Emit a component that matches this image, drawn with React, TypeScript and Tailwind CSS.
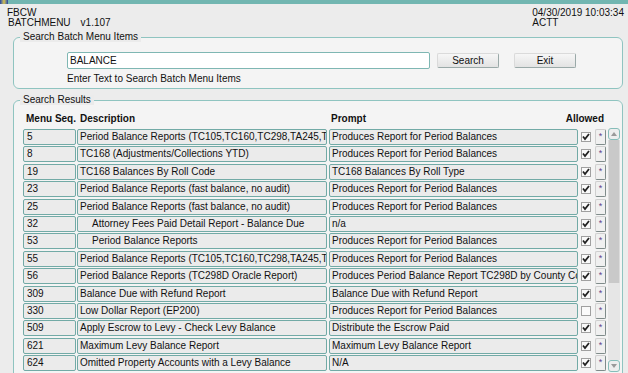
import React from "react";

type Row = { seq: string; desc: string; prompt: string; allowed: boolean; indent?: boolean };

const rows: Row[] = [
  { seq: "5", desc: "Period Balance Reports (TC105,TC160,TC298,TA245,TC", prompt: "Produces Report for Period Balances", allowed: true },
  { seq: "8", desc: "TC168 (Adjustments/Collections YTD)", prompt: "Produces Report for Period Balances", allowed: true },
  { seq: "19", desc: "TC168 Balances By Roll Code", prompt: "TC168 Balances By Roll Type", allowed: true },
  { seq: "23", desc: "Period Balance Reports (fast balance, no audit)", prompt: "Produces Report for Period Balances", allowed: true },
  { seq: "25", desc: "Period Balance Reports (fast balance, no audit)", prompt: "Produces Report for Period Balances", allowed: true },
  { seq: "32", desc: "Attorney Fees Paid Detail Report - Balance Due", prompt: "n/a", allowed: true, indent: true },
  { seq: "53", desc: "Period Balance Reports", prompt: "Produces Report for Period Balances", allowed: true, indent: true },
  { seq: "55", desc: "Period Balance Reports (TC105,TC160,TC298,TA245,TC", prompt: "Produces Report for Period Balances", allowed: true },
  { seq: "56", desc: "Period Balance Reports (TC298D Oracle Report)", prompt: "Produces Period Balance Report TC298D by County Co", allowed: true },
  { seq: "309", desc: "Balance Due with Refund Report", prompt: "Balance Due with Refund Report", allowed: true },
  { seq: "330", desc: "Low Dollar Report (EP200)", prompt: "Produces Report for Period Balances", allowed: false },
  { seq: "509", desc: "Apply Escrow to Levy - Check Levy Balance", prompt: "Distribute the Escrow Paid", allowed: true },
  { seq: "621", desc: "Maximum Levy Balance Report", prompt: "Maximum Levy Balance Report", allowed: true },
  { seq: "624", desc: "Omitted Property Accounts with a Levy Balance", prompt: "N/A", allowed: true },
];

const cell =
  "h-[16px] shrink-0 overflow-hidden whitespace-nowrap rounded-[2px] border border-[#72aaa6] bg-[#ebebeb] pl-[2px] leading-[14px]";

const Check = ({ on }: { on: boolean }) => (
  <div className="ml-[3px] mt-[3px] h-[10px] w-[10px] shrink-0 border border-[#a0a0a0] bg-[#fafafa]">
    {on && (
      <svg width="8" height="8" viewBox="0 0 8 8" className="block">
        <path d="M1 3.5 L3 6 L7 1" fill="none" stroke="#222" strokeWidth="1.8" />
      </svg>
    )}
  </div>
);

const Star = () => (
  <div className="ml-[4px] flex h-[16px] w-[11px] shrink-0 justify-center rounded-[2px] border border-[#cfcfcf] border-b-[#7f8b8a] border-r-[#7f8b8a] bg-[#f0f0f0] pt-[2px] text-[9px] leading-[8px] text-[#5b3f8a]">
    *
  </div>
);

const Button = ({ label, className }: { label: string; className?: string }) => (
  <div
    className={
      "flex h-[15px] w-[62px] items-center justify-center rounded-[2px] border border-[#dadada] border-b-[#9aa9a8] border-r-[#9aa9a8] bg-gradient-to-b from-[#f6f6f6] to-[#e3e3e3] " +
      (className ?? "")
    }
  >
    {label}
  </div>
);

export default function App() {
  return (
    <div className="h-[373px] w-[628px] overflow-hidden bg-[#ececec] font-['Liberation_Sans',Arial,sans-serif] text-[10px] text-[#111]">
      <div className="flex h-[4px] bg-[#72b6b1]">
        <div className="h-[4px] w-[8px] bg-gradient-to-r from-[#2b3f9e] via-[#d9c23a] to-[#2b3f9e]" />
      </div>

      <div className="flex justify-between pl-[7px] pr-[4px] pt-[4px] leading-[10px]">
        <div>
          <div>FBCW</div>
          <div className="pl-px">
            BATCHMENU<span className="ml-[10px]">v1.107</span>
          </div>
        </div>
        <div>
          <div>04/30/2019 10:03:34</div>
          <div>ACTT</div>
        </div>
      </div>

      <fieldset className="ml-[13px] mr-[5px] mt-[4px] rounded-[6px] border border-[#8fc4c0] bg-[#f4f4f4] pb-[4px] pl-[53px]">
        <legend className="-ml-[47px] bg-[#ebebeb] px-[3px] leading-[10px]">Search Batch Menu Items</legend>
        <div className="mt-[10px] flex items-center">
          <div className="h-[17px] w-[363px] rounded-[2px] border border-[#7fb7b3] bg-white pl-[2px] leading-[15px]">
            BALANCE
          </div>
          <Button label="Search" className="ml-[7px]" />
          <Button label="Exit" className="ml-[15px]" />
        </div>
        <div className="mt-[5px] leading-[10px]">Enter Text to Search Batch Menu Items</div>
      </fieldset>

      <fieldset className="ml-[13px] mr-[5px] mt-[6px] h-[300px] rounded-[6px] border border-[#8fc4c0] bg-[#f4f4f4] pl-[9px]">
        <legend className="-ml-[3px] bg-[#ebebeb] px-[3px] leading-[10px]">Search Results</legend>
        <div className="mt-[9px] flex">
          <div className="w-[583px]">
            <div className="mb-[5px] flex font-bold leading-[10px]">
              <div className="w-[53px] pl-[3px]">Menu Seq.</div>
              <div className="ml-[1px] w-[250px] pl-[3px]">Description</div>
              <div className="ml-[2px] flex-1 pl-[2px]">Prompt</div>
              <div className="pr-[2px]">Allowed</div>
            </div>
            <div className="flex flex-col gap-y-[1.4px]">
              {rows.map((r) => (
                <div key={r.seq} className="flex">
                  <div className={cell + " w-[53px] pl-[3px]"}>{r.seq}</div>
                  <div className={cell + " ml-[1px] w-[250px] " + (r.indent ? "pl-[14px]" : "")}>{r.desc}</div>
                  <div className={cell + " ml-[2px] w-[249px]"}>{r.prompt}</div>
                  <Check on={r.allowed} />
                  <Star />
                </div>
              ))}
            </div>
          </div>

          <div className="ml-[2px] mt-[14px] flex h-[244px] w-[12px] flex-col">
            <div className="flex h-[12px] items-center justify-center rounded-[3px] border border-[#86bdb9] bg-[#eeeeee]">
              <svg width="6" height="4" viewBox="0 0 6 4">
                <path d="M0 4 L3 0 L6 4 Z" fill="#9a9a9a" />
              </svg>
            </div>
            <div className="h-[143px] border-x border-[#dcdcdc] bg-[#c9c9c9]" />
            <div className="flex-1 bg-[#e6e6e6]" />
            <div className="flex h-[12px] items-center justify-center rounded-[3px] border border-[#86bdb9] bg-[#eeeeee]">
              <svg width="6" height="4" viewBox="0 0 6 4">
                <path d="M0 0 L6 0 L3 4 Z" fill="#9a9a9a" />
              </svg>
            </div>
          </div>
        </div>
      </fieldset>
    </div>
  );
}
